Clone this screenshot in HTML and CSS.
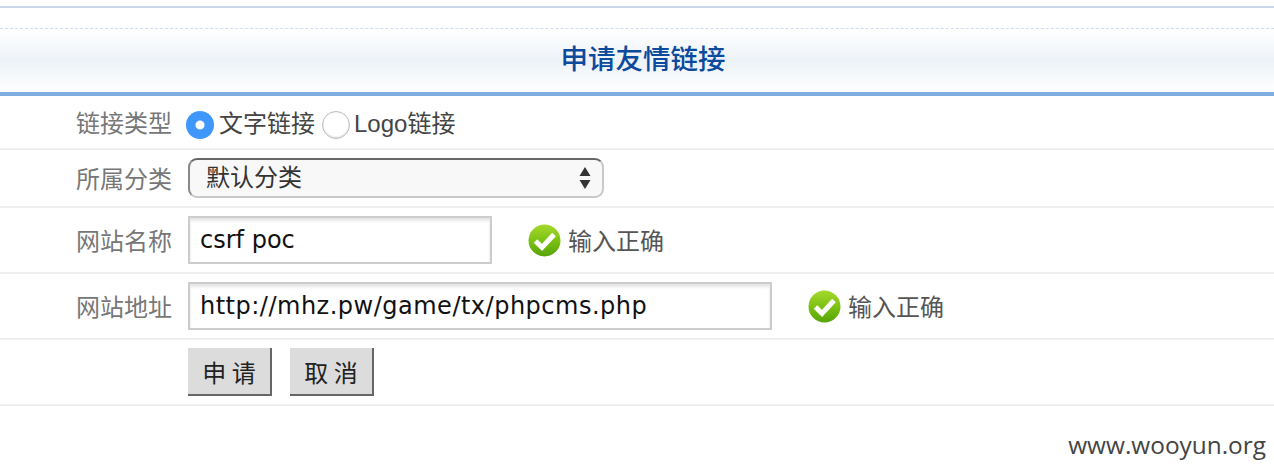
FILE: index.html
```html
<!DOCTYPE html>
<html lang="zh-CN">
<head>
    <meta charset="UTF-8">
    <title>申请友情链接</title>
    <link rel="stylesheet" href="styles.css">
</head>
<body>
    <svg class="defs" width="0" height="0">
        <defs>
            <linearGradient id="okFill" x1="0" y1="0" x2="0" y2="1">
                <stop offset="0" stop-color="#a6d92c"/>
                <stop offset="0.55" stop-color="#78bf12"/>
                <stop offset="1" stop-color="#58a408"/>
            </linearGradient>
        </defs>
    </svg>

    <div class="top-rule"></div>

    <h1 class="panel-title">申请友情链接</h1>

    <form class="link-form">
        <!-- 链接类型 -->
        <div class="row row-type">
            <label class="row-label">链接类型</label>
            <div class="radio-group">
                <input class="radio" type="radio" name="linktype" checked>
                <span class="radio-text">文字链接</span>
                <input class="radio" type="radio" name="linktype">
                <span class="radio-text">Logo链接</span>
            </div>
        </div>

        <!-- 所属分类 -->
        <div class="row row-cat">
            <label class="row-label">所属分类</label>
            <div class="select-box">
                <span class="select-value">默认分类</span>
                <svg class="select-arrows" width="12" height="24" viewBox="0 0 12 24">
                    <path d="M6 1 L11.5 10 L0.5 10 Z" fill="#333"/>
                    <path d="M0.5 14 L11.5 14 L6 23 Z" fill="#333"/>
                </svg>
            </div>
        </div>

        <!-- 网站名称 -->
        <div class="row row-name">
            <label class="row-label">网站名称</label>
            <input class="text-input name-input" type="text" value="csrf poc">
            <div class="ok-tip">
                <svg class="ok-icon" width="33" height="33" viewBox="0 0 33 33">
                    <circle cx="16.5" cy="16.5" r="16" fill="url(#okFill)"/>
                    <path d="M7.5 17 L14 23.5 L26 10.5" fill="none" stroke="#fff" stroke-width="5"/>
                </svg>
                <span class="ok-text">输入正确</span>
            </div>
        </div>

        <!-- 网站地址 -->
        <div class="row row-url">
            <label class="row-label">网站地址</label>
            <input class="text-input url-input" type="text" value="http://mhz.pw/game/tx/phpcms.php">
            <div class="ok-tip">
                <svg class="ok-icon" width="33" height="33" viewBox="0 0 33 33">
                    <circle cx="16.5" cy="16.5" r="16" fill="url(#okFill)"/>
                    <path d="M7.5 17 L14 23.5 L26 10.5" fill="none" stroke="#fff" stroke-width="5"/>
                </svg>
                <span class="ok-text">输入正确</span>
            </div>
        </div>

        <!-- 按钮 -->
        <div class="row row-btn">
            <span class="row-label"></span>
            <button class="btn" type="button">申 请</button>
            <button class="btn" type="button">取 消</button>
        </div>
    </form>

    <div class="watermark">www.wooyun.org</div>
</body>
</html>
```

FILE: styles.css
```css
/* page */
html, body {
    margin: 0;
    height: 476px;
    overflow: hidden;
    background: #fff;
}

body {
    font-family: "Liberation Sans", "Noto Sans CJK SC", sans-serif;
    color: #444;
}

.defs {
    display: block;
    height: 0;
}

.top-rule {
    margin-top: 6px;
    height: 2px;
    background: #c9d7e8;
}

/* title bar */
.panel-title {
    margin: 20px 0 0;
    height: 63px;
    line-height: 57px;
    border-top: 1px dashed #cfdeee;
    border-bottom: 4px solid #7fade2;
    background: linear-gradient(#fff 0%, #edf2f8 50%, #fff 100%);
    color: #0b4a9c;
    font-size: 27.5px;
    font-weight: 500;
    font-family: "Noto Sans CJK SC", sans-serif;
    text-align: center;
    padding-left: 12px;
}

/* rows */
.row {
    display: flex;
    align-items: center;
    border-bottom: 2px solid #efefef;
}

.row-type { height: 52px; }
.row-cat { height: 56px; }
.row-name { height: 64px; }
.row-url { height: 64px; }
.row-btn { height: 64px; gap: 18px; }

.row-label {
    width: 172px;
    margin-right: 16px;
    margin-bottom: 2px;
    text-align: right;
    color: #777;
    font-size: 24px;
    font-family: "Noto Sans CJK SC", sans-serif;
    flex-shrink: 0;
}

.row-btn .row-label {
    margin-right: -2px;
}

/* radios */
.radio-group {
    display: flex;
    align-items: center;
    margin-left: -2px;
    font-size: 24px;
}

.radio {
    appearance: none;
    width: 28px;
    height: 28px;
    margin: 6px 5px 0 0;
    border-radius: 50%;
    border: 1px solid #bbb;
    background: #fff;
    box-shadow: inset 0 -1px 2px rgba(0, 0, 0, 0.15);
}

.radio:checked {
    border: 0;
    background: radial-gradient(circle, #fff 0, #fff 4px, #3f97fb 5px);
    box-shadow: none;
}

.radio-text {
    margin-right: 7px;
    margin-bottom: 2px;
    font-family: "Liberation Sans", "Noto Sans CJK SC", sans-serif;
}

.radio-text:last-child {
    margin-left: -1px;
}

/* select */
.select-box {
    box-sizing: border-box;
    width: 416px;
    height: 40px;
    display: flex;
    align-items: center;
    justify-content: space-between;
    padding: 0 11px 0 16px;
    border: 2px solid #c9c9c9;
    border-top-color: #666;
    border-left-color: #888;
    border-radius: 9px;
    background: #f8f8f8;
    color: #333;
    font-size: 24px;
    font-family: "Noto Sans CJK SC", sans-serif;
}

.select-value {
    margin-bottom: 5px;
}

/* inputs */
.text-input {
    box-sizing: border-box;
    height: 48px;
    padding: 0 10px;
    border: 2px solid #ccc;
    box-shadow: inset 0 3px 3px rgba(0, 0, 0, 0.1);
    outline: none;
    color: #111;
    font-family: "DejaVu Sans", sans-serif;
    font-size: 24px;
}

.name-input { width: 304px; }
.url-input { width: 584px; letter-spacing: 0.5px; }

.ok-tip {
    display: flex;
    align-items: center;
    gap: 7px;
    margin-left: 36px;
    color: #555;
    font-size: 24px;
    font-family: "Noto Sans CJK SC", sans-serif;
}

.ok-text {
    margin-bottom: 2px;
}

/* buttons */
.btn {
    box-sizing: border-box;
    width: 84px;
    height: 48px;
    padding: 0;
    border: 0;
    border-right: 2px solid #666;
    border-bottom: 2px solid #666;
    background: #dcdcdc;
    color: #222;
    font-size: 24px;
    font-family: "Noto Sans CJK SC", sans-serif;
}

/* watermark */
.watermark {
    position: absolute;
    right: 8px;
    top: 428px;
    color: #444;
    font-family: "Open Sans", sans-serif;
    font-size: 24.4px;
}
```
